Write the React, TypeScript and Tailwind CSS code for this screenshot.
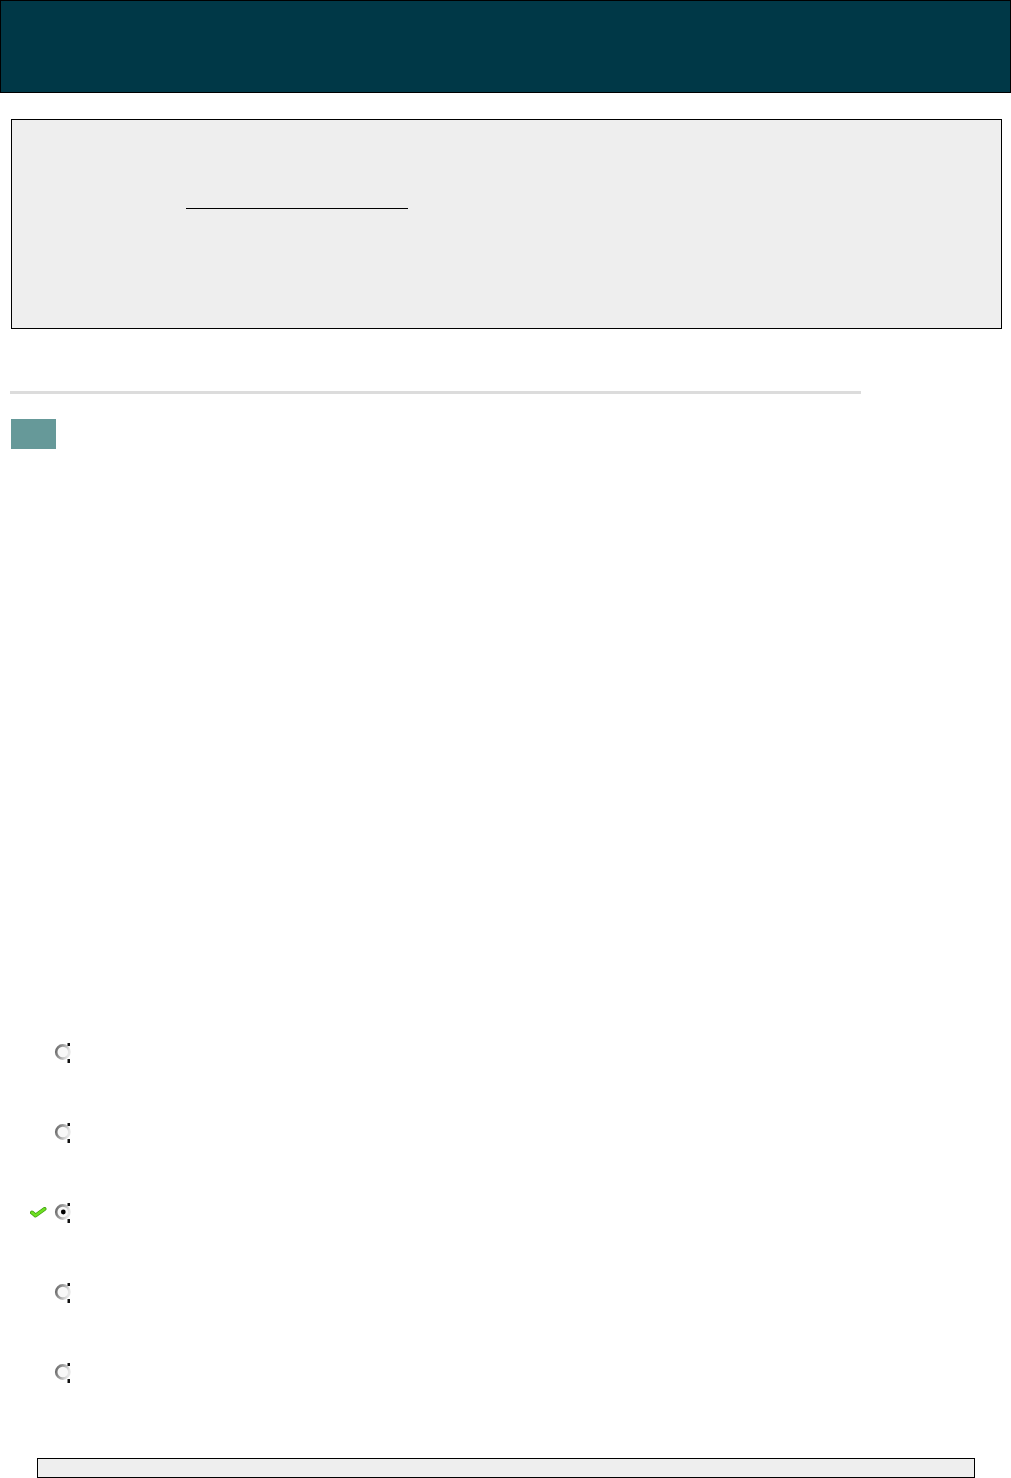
import React from "react";

function Radio({ checked }: { checked?: boolean }) {
  return (
    <svg width="20" height="28" viewBox="0 0 20 28" className="block">
      <defs>
        <linearGradient id="rg" x1="0" y1="0" x2="1" y2="0.3">
          <stop offset="0" stopColor="#666666" />
          <stop offset="0.5" stopColor="#a0a0a0" />
          <stop offset="1" stopColor="#e6e6e6" />
        </linearGradient>
      </defs>
      <circle cx="8.8" cy="12" r="6.6" fill="#f8f8f8" stroke="url(#rg)" strokeWidth="2.6" />
      <rect x="13.5" y="3" width="2.5" height="3" fill="#111" />
      <rect x="13.5" y="19" width="2.5" height="4" fill="#111" />
      {checked && <circle cx="9.3" cy="12" r="2.4" fill="#000" />}
    </svg>
  );
}

function Check() {
  return (
    <svg width="17" height="11" viewBox="0 0 17 11" className="block">
      <path d="M2 5.5 L5.5 8.5 L14.5 2" fill="none" stroke="#3e9e0e" strokeWidth="4" strokeLinecap="round" strokeLinejoin="round" />
      <path d="M2 5.5 L5.5 8.5 L14.5 2" fill="none" stroke="#6ee022" strokeWidth="2.4" strokeLinecap="round" strokeLinejoin="round" />
    </svg>
  );
}

export default function App() {
  const rows = [false, false, true, false, false];
  return (
    <div className="w-[1011px] min-h-[1478px] bg-white relative" style={{ fontFamily: '"Liberation Sans", Arial, sans-serif' }}>
      <div className="h-[93px] w-[1011px] bg-[#003847] border border-black" />
      <div className="ml-[11px] mt-[26px] h-[210px] w-[991px] bg-[#eeeeee] border border-black relative">
        <div className="absolute left-[174px] top-[88px] w-[222px] h-px bg-black" />
      </div>
      <div className="ml-[10px] mt-[62px] h-[3px] w-[851px] bg-[#dcdcdc]" />
      <div className="ml-[11px] mt-[25px] h-[30px] w-[45px] bg-[#669999]" />
      <div className="mt-[591px] flex flex-col gap-[52px]">
        {rows.map((c, i) => (
          <div key={i} className="flex items-start h-[28px]">
            <div className="w-[24px] ml-[30px] h-[28px]">
              {c && <div className="mt-[7px]"><Check /></div>}
            </div>
            <Radio checked={c} />
          </div>
        ))}
      </div>
      <div className="ml-[37px] mt-[70px] h-[20px] w-[938px] bg-[#eeeeee] border border-black" />
    </div>
  );
}
